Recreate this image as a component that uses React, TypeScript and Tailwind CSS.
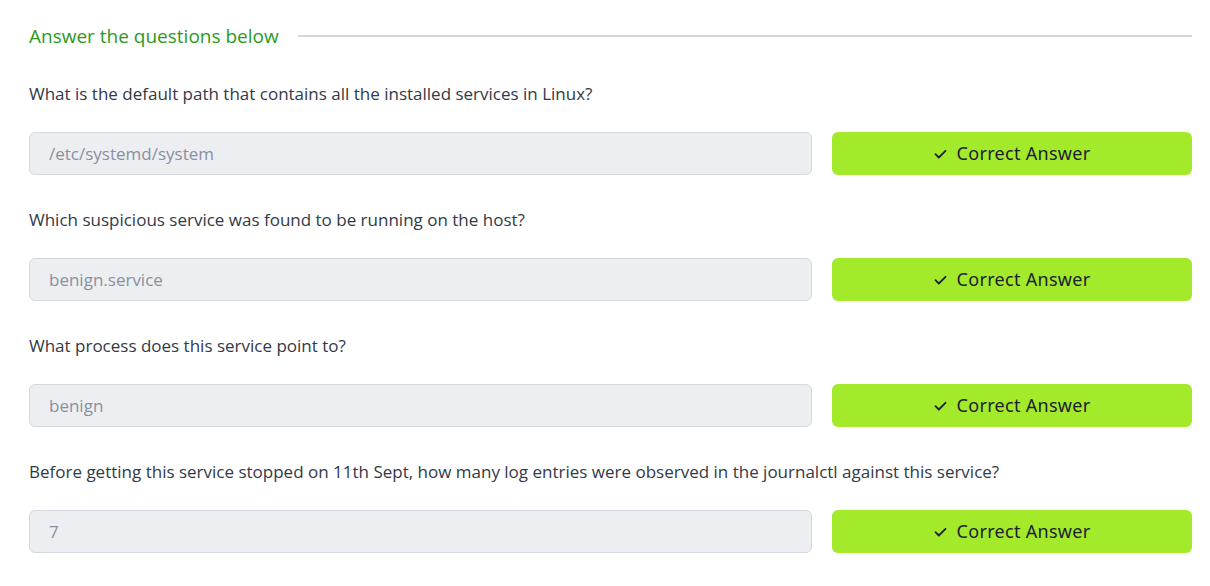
const questions = [
  {
    q: "What is the default path that contains all the installed services in Linux?",
    a: "/etc/systemd/system",
  },
  {
    q: "Which suspicious service was found to be running on the host?",
    a: "benign.service",
  },
  {
    q: "What process does this service point to?",
    a: "benign",
  },
  {
    q: "Before getting this service stopped on 11th Sept, how many log entries were observed in the journalctl against this service?",
    a: "7",
  },
];

function Check() {
  return (
    <svg width="13" height="10" viewBox="0 0 13 10" fill="none" stroke="currentColor" strokeWidth="1.8" strokeLinecap="round" strokeLinejoin="round">
      <path d="M1.5 5.2l3.3 3.3L11.5 1.8" />
    </svg>
  );
}

export default function App() {
  return (
    <div className="min-h-screen bg-white pl-[29px] pr-[18px] pt-[22px] font-['Open_Sans','Noto_Sans',sans-serif]">
      <div className="flex items-center gap-[19px] h-[28px]">
        <h2 className="text-[19px] text-[#2c9a1f] whitespace-nowrap">Answer the questions below</h2>
        <div className="flex-1 h-[2px] bg-[#d5d8de]" />
      </div>

      <div className="mt-[32px] flex flex-col gap-[33px]">
        {questions.map((item) => (
          <div key={item.q}>
            <p className="text-[17px] leading-[24px] text-[#333947]">{item.q}</p>
            <div className="mt-[26px] flex gap-[20px]">
              <div className="flex-1 h-[43px] flex items-center px-[19px] bg-[#edeef2] border border-[#d5d8e0] rounded-[6px] text-[17px] text-[#8890a0]">
                {item.a}
              </div>
              <button className="w-[360px] h-[43px] flex items-center justify-center gap-[10px] bg-[#a3ea2a] rounded-[6px] text-[18px] tracking-[0.3px] text-[#1c2230] font-['Noto_Sans',sans-serif]">
                <Check />
                Correct Answer
              </button>
            </div>
          </div>
        ))}
      </div>
    </div>
  );
}
